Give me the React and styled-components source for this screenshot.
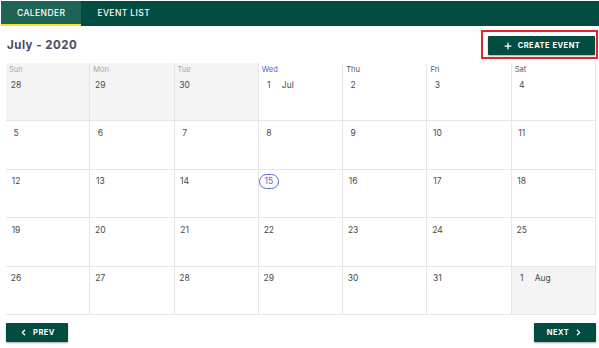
import React from 'react';
import styled, { createGlobalStyle, css } from 'styled-components';
import { Plus, ChevronLeft, ChevronRight } from 'lucide-react';

const GlobalStyle = createGlobalStyle`
  html, body {
    margin: 0;
    padding: 0;
    background: #ffffff;
  }
  body {
    font-family: Inter, "Open Sans", Arial, sans-serif;
    width: 599px;
    height: 348px;
    overflow: hidden;
  }
`;

const green = '#034c41';

const weekdays = ['Sun', 'Mon', 'Tue', 'Wed', 'Thu', 'Fri', 'Sat'];

const weeks = [
  [
    { d: 28, off: true },
    { d: 29, off: true },
    { d: 30, off: true },
    { d: 1, label: 'Jul' },
    { d: 2 },
    { d: 3 },
    { d: 4 },
  ],
  [5, 6, 7, 8, 9, 10, 11].map((d) => ({ d })),
  [12, 13, 14, 15, 16, 17, 18].map((d) => ({ d, today: d === 15 })),
  [19, 20, 21, 22, 23, 24, 25].map((d) => ({ d })),
  [
    { d: 26 },
    { d: 27 },
    { d: 28 },
    { d: 29 },
    { d: 30 },
    { d: 31 },
    { d: 1, label: 'Aug', off: true },
  ],
];

function App() {
  return (
    <Page>
      <GlobalStyle />
      <TabBar>
        <Tab active>CALENDER</Tab>
        <Tab>EVENT LIST</Tab>
      </TabBar>

      <Toolbar>
        <Title>July - 2020</Title>
        <Highlight>
          <Button wide>
            <Plus size={10} strokeWidth={3} />
            CREATE EVENT
          </Button>
        </Highlight>
      </Toolbar>

      <Grid>
        {weeks.map((week, wi) =>
          week.map((day, di) => (
            <Cell key={`${wi}-${di}`} off={day.off} first={wi === 0}>
              {wi === 0 && (
                <DayName current={di === 3} off={day.off}>
                  {weekdays[di]}
                </DayName>
              )}
              <DateRow>
                <DateBadge today={day.today}>{day.d}</DateBadge>
                {day.label && <MonthLabel>{day.label}</MonthLabel>}
              </DateRow>
            </Cell>
          ))
        )}
      </Grid>

      <Footer>
        <Button>
          <ChevronLeft size={9} strokeWidth={3.5} />
          PREV
        </Button>
        <Button>
          NEXT
          <ChevronRight size={9} strokeWidth={3.5} />
        </Button>
      </Footer>
    </Page>
  );
}

export default App;

// Styles

const Page = styled.div`
  width: 599px;
  height: 348px;
  padding-top: 1px;
  box-sizing: border-box;
  background: #fff;
`;

const TabBar = styled.nav`
  display: flex;
  height: 25px;
  margin-left: 1px;
  background: ${green};
`;

const Tab = styled.div`
  display: flex;
  align-items: center;
  padding: 0 16px;
  font-size: 8.5px;
  font-weight: 500;
  letter-spacing: 0.4px;
  color: #ffffff;
  border-bottom: 2px solid transparent;
  ${(p) =>
    p.active &&
    css`
      background: #1d6457;
      border-bottom-color: #f4e41c;
    `}
`;

const Toolbar = styled.div`
  display: flex;
  justify-content: space-between;
  align-items: center;
  height: 37px;
  padding: 0 1px 0 7px;
`;

const Title = styled.h1`
  margin: 0;
  font-size: 11.5px;
  font-weight: 700;
  color: #4b4b5c;
  letter-spacing: 0.5px;
`;

const Highlight = styled.div`
  display: flex;
  padding: 4px 1px 2px 5px;
  border: 2px solid #e3242b;
`;

const Button = styled.button`
  display: flex;
  align-items: center;
  justify-content: center;
  gap: 5px;
  height: 19px;
  width: ${(p) => (p.wide ? '107px' : '62px')};
  padding: 0;
  border: none;
  border-radius: 1px;
  background: ${green};
  color: #ffffff;
  font-family: inherit;
  font-size: 7.5px;
  font-weight: 700;
  letter-spacing: 0.5px;
  box-shadow: 0 1px 2px rgba(0, 0, 0, 0.35);
  cursor: pointer;
`;

const Grid = styled.div`
  display: grid;
  grid-template-columns: repeat(7, 1fr);
  grid-template-rows: 58px repeat(4, 48.5px);
  margin: 0 3px 0 6px;
`;

const Cell = styled.div`
  display: flex;
  flex-direction: column;
  padding: ${(p) => (p.first ? '1px 0 0 0' : '4px 0 0 0')};
  background: ${(p) => (p.off ? '#f4f4f4' : '#ffffff')};
  border-right: 1px solid #e6e6e6;
  border-bottom: 1px solid #e6e6e6;
`;

const DayName = styled.div`
  padding-left: 3px;
  height: 11px;
  line-height: 11px;
  font-size: 7.5px;
  color: ${(p) => (p.current ? '#5560d6' : p.off ? '#a9a9a9' : '#555555')};
  margin-bottom: 2px;
`;

const DateRow = styled.div`
  display: flex;
  align-items: center;
  gap: 3px;
`;

const DateBadge = styled.span`
  display: inline-flex;
  align-items: center;
  justify-content: center;
  min-width: 20px;
  height: 15px;
  box-sizing: border-box;
  border: 1px solid ${(p) => (p.today ? '#5a66d8' : 'transparent')};
  border-radius: 9px;
  font-size: 8.5px;
  color: ${(p) => (p.today ? '#5a66d8' : '#4a4a4a')};
`;

const MonthLabel = styled.span`
  font-size: 8.5px;
  color: #4a4a4a;
`;

const Footer = styled.div`
  display: flex;
  justify-content: space-between;
  padding: 8px 3px 0 6px;
`;
